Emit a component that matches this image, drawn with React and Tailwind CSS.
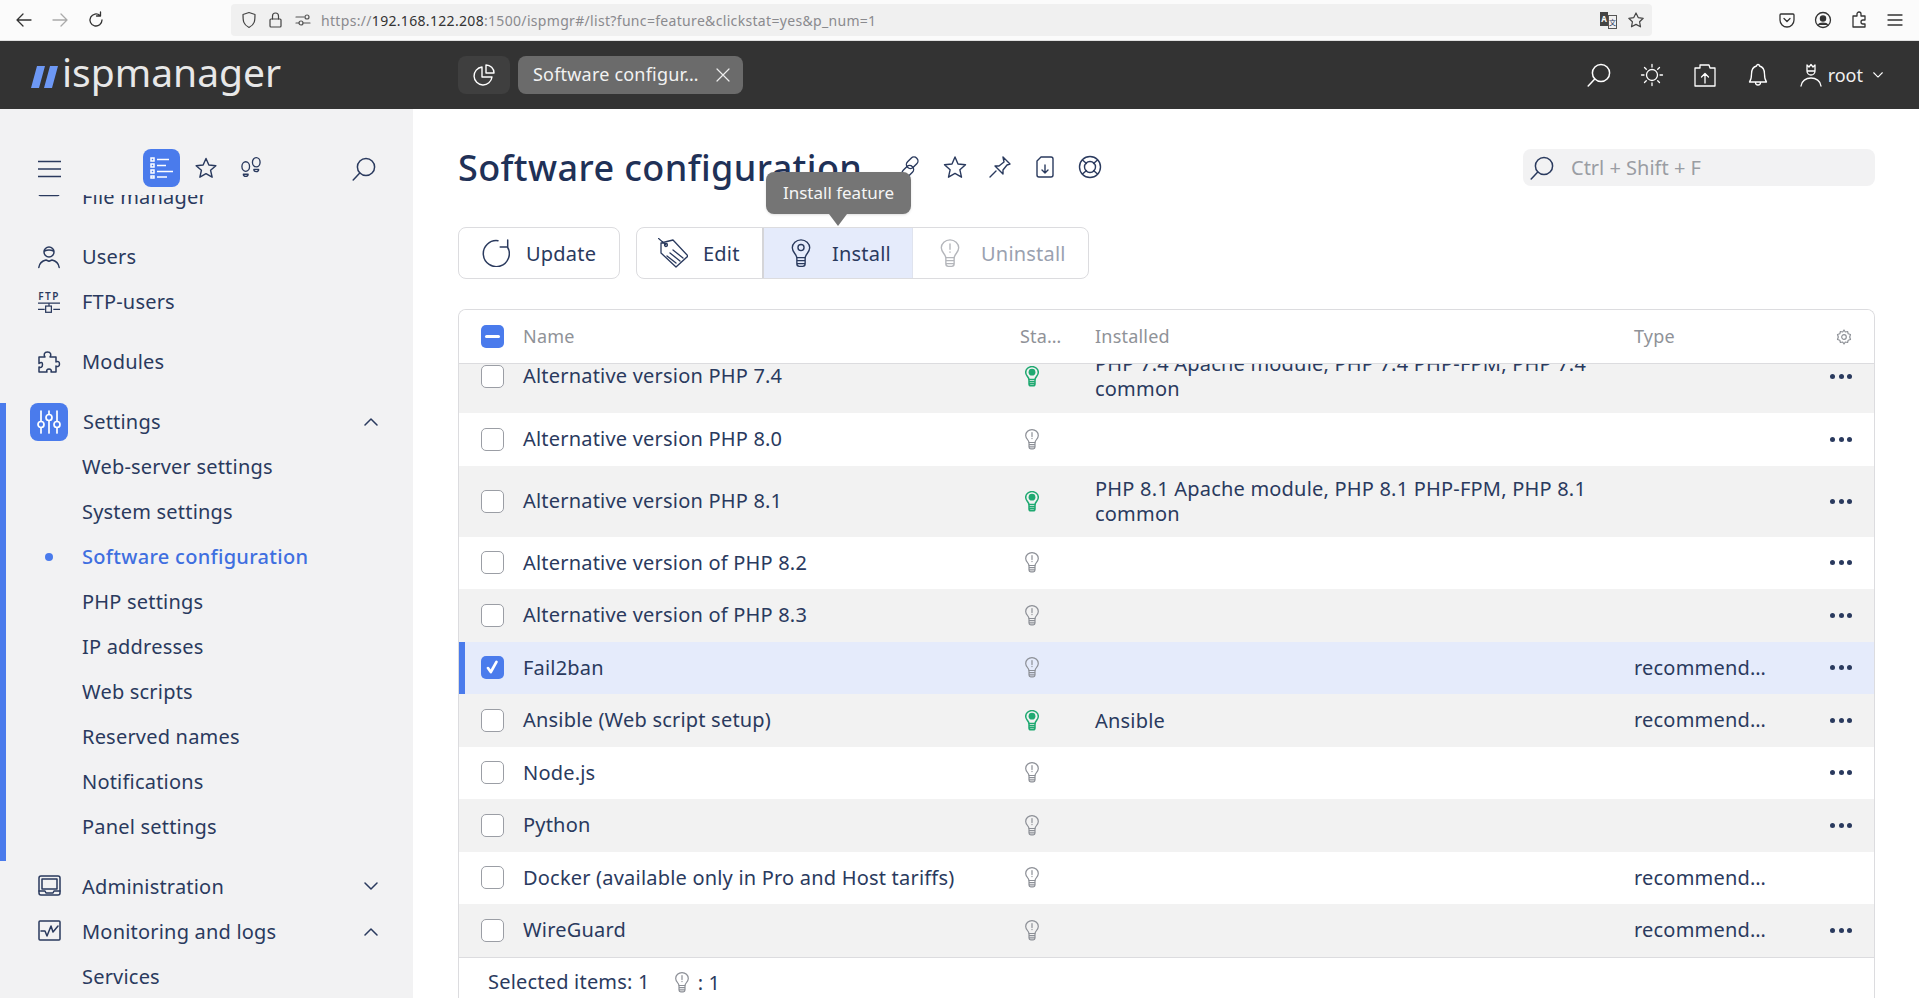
import React from "react";

const S = ({ w = 24, h = 24, vb, c = "#2a3a5e", sw = 1.5, children, className = "" }) => (
  <svg width={w} height={h} viewBox={vb || `0 0 ${w} ${h}`} fill="none" stroke={c} strokeWidth={sw} strokeLinecap="round" strokeLinejoin="round" className={"shrink-0 " + className}>
    {children}
  </svg>
);

const Bulb = ({ c = "#8c8f96", kind = "off", w = 14, h = 21, sw = 1.2 }) => (
  <S w={w} h={h} vb="0 0 14 21" c={c} sw={sw}>
    <path d="M4 13.500 C3.700 11 .7 9.500 .7 6.400 A6.300 5.800 0 0 1 13.300 6.400 C13.300 9.500 10.300 11 10 13.500 Z" />
    <path d="M4 13.500v4.500q0 1.800 1.800 1.800h2.400q1.800 0 1.800-1.800v-4.500M4 15.700h6M4 17.800h6" />
    {kind === "on" && <circle cx="7" cy="6.200" r="3.400" fill={c} stroke="none" />}
    {kind === "off" && <path d="M7 3.500v4M7 9.300v.3" />}
    {kind === "ring" && <circle cx="7" cy="6.200" r="2.200" />}
  </S>
);

const Search = ({ c = "#2a3a5e", s = 24 }) => (
  <S w={s} h={s} vb="0 0 24 24" c={c}>
    <circle cx="14" cy="10" r="8.600" />
    <path d="M7.800 16 L1.200 23" />
  </S>
);

const Check = ({ state }) => {
  if (state === "on")
    return (
      <span className="w-[23px] h-[23px] rounded-[5px] bg-[#4a7bec] flex items-center justify-center shrink-0">
        <svg width="17" height="17" viewBox="0 0 15 15" fill="none" stroke="#fff" strokeWidth="2.400" strokeLinecap="round" strokeLinejoin="round"><path d="M3.500 8l2.500 3.500L11 2.500" /></svg>
      </span>
    );
  if (state === "mix")
    return (
      <span className="w-[23px] h-[23px] rounded-[5px] bg-[#4a7bec] flex items-center justify-center shrink-0">
        <span className="w-[15px] h-[3px] bg-white rounded-sm" />
      </span>
    );
  return <span className="w-[23px] h-[23px] rounded-[5px] bg-white border border-[#9b9ea5] shrink-0" />;
};

const Chevron = ({ up, c = "#2a3a5e", s = 14 }) => (
  <svg width={s} height={s * 0.65} viewBox="0 0 14 9" fill="none" stroke={c} strokeWidth="1.500" strokeLinecap="round" strokeLinejoin="round" className="shrink-0">
    <path d={up ? "M1 8l6-6 6 6" : "M1 1l6 6 6-6"} />
  </svg>
);

const icons = {
  folder: <path d="M1 1v7a1.500 1.500 0 0 0 1.500 1.500h17A1.500 1.500 0 0 0 21 8V1" />,
  user: <><circle cx="11" cy="6" r="5" /><path d="M6.500 5q4.500-2 9 0" /><path d="M.8 21.500c.7-5 5-7 7.200-7.500l3 1.300 3-1.300c2.200.5 6.500 2.500 7.200 7.500" /></>,
  puzzle: <path d="M1 6h6c-1.500-2-1-5 2.500-5s4 3 2.500 5h6v5c1.500-1 3.500-.7 3.500 2s-2 3-3.500 2v6h-5c1-2-.5-3-2-3s-3 1-2 3H1v-5c2 1 3.500 0 3.500-2.500S3 11 1 12.500Z" />,
  admin: <><rect x="1" y="1" width="21" height="19" rx="2" /><rect x="4" y="4" width="15" height="10" /><path d="M1 16h6l1 2h7l1-2h6" /></>,
  chart: <><rect x="1" y="1" width="21" height="19" rx="1" /><path d="M3 11h4l2 5 4-10 2 6 5-6" /></>,
};

const Nav = ({ label, icon, chevron, ftp }) => (
  <div className="h-[45px] flex items-center pl-[38px] pr-[35px]">
    <span className="w-[22px] h-[23px] mr-[22px] flex items-center justify-center shrink-0">
      {ftp ? (
        <span className="flex flex-col items-center w-[22px]">
          <span className="text-[10px] leading-[10px] font-semibold tracking-[1.500px] text-[#2a3a5e]">FTP</span>
          <svg width="22" height="13" viewBox="0 0 23 13" fill="none" stroke="#2a3a5e" strokeWidth="1.300"><path d="M0 2h23M0 8.500h7M16 8.500h7M11.500 2v3" /><rect x="8" y="5" width="6" height="6.500" /></svg>
        </span>
      ) : (
        <S w={23} h={23} vb="0 0 23 23">{icons[icon]}</S>
      )}
    </span>
    <span className="flex-1 whitespace-nowrap">{label}</span>
    {chevron && <Chevron up={chevron === "up"} />}
  </div>
);

const Sub = ({ label, active }) => (
  <div className={"h-[45px] flex items-center pl-[76px] relative " + (active ? "text-[#3f6fe0] font-medium tracking-[0.3px]" : "")}>
    {active && <span className="absolute left-[39px] w-[8px] h-[8px] rounded-full bg-[#4a7bec]" />}
    {label}
  </div>
);

const rows = [
  { name: "Alternative version PHP 7.4", on: true, inst: ["PHP 7.4 Apache module, PHP 7.4 PHP-FPM, PHP 7.4", "common"], bg: "bg-[#f2f2f2]", tall: true, clip: true, more: true },
  { name: "Alternative version PHP 8.0", bg: "bg-white", more: true },
  { name: "Alternative version PHP 8.1", on: true, inst: ["PHP 8.1 Apache module, PHP 8.1 PHP-FPM, PHP 8.1", "common"], bg: "bg-[#f2f2f2]", tall: true, more: true },
  { name: "Alternative version of PHP 8.2", bg: "bg-white", more: true },
  { name: "Alternative version of PHP 8.3", bg: "bg-[#f2f2f2]", more: true },
  { name: "Fail2ban", sel: true, type: "recommend…", bg: "bg-[#e5ebfb]", more: true },
  { name: "Ansible (Web script setup)", on: true, inst: ["Ansible"], type: "recommend…", bg: "bg-[#f2f2f2]", more: true },
  { name: "Node.js", bg: "bg-white", more: true },
  { name: "Python", bg: "bg-[#f2f2f2]", more: true },
  { name: "Docker (available only in Pro and Host tariffs)", type: "recommend…", bg: "bg-white" },
  { name: "WireGuard", type: "recommend…", bg: "bg-[#f2f2f2]", more: true },
];

const Row = ({ r }) => (
  <div className={"flex items-center relative text-[#2a3a5e] " + r.bg + " " + (r.tall ? "h-[71px] " : "h-[52.500px] ") + (r.clip ? "-mt-[22px] pb-[3px]" : "")}>
    {r.sel && <span className="absolute left-0 top-0 bottom-0 w-[6px] bg-[#4a7bec]" />}
    <span className="w-[64px] pl-[22px] flex shrink-0"><Check state={r.sel ? "on" : "off"} /></span>
    <span className="w-[497px] shrink-0 whitespace-nowrap">{r.name}</span>
    <span className="w-[75px] shrink-0 flex pl-[5px]"><Bulb c={r.on ? "#1fa971" : "#8c8f96"} kind={r.on ? "on" : "off"} sw={r.on ? 1.500 : 1.200} /></span>
    <span className="w-[539px] shrink-0 leading-[25px] whitespace-nowrap">
      {(r.inst || []).map((l) => <div key={l}>{l}</div>)}
    </span>
    <span className="w-[185px] shrink-0 whitespace-nowrap">{r.type}</span>
    {r.more && (
      <span className="flex gap-[3.500px] ml-[11px]">
        <i className="w-[5px] h-[5px] rounded-full bg-[#2a3a5e]" /><i className="w-[5px] h-[5px] rounded-full bg-[#2a3a5e]" /><i className="w-[5px] h-[5px] rounded-full bg-[#2a3a5e]" />
      </span>
    )}
  </div>
);

export default function App() {
  return (
    <div className="w-[1919px] h-[998px] overflow-hidden bg-white flex flex-col text-[20px] tracking-[0.2px] text-[#2a3a5e]" style={{ fontFamily: '"Noto Sans", sans-serif' }}>
      {/* browser chrome */}
      <div className="h-[41px] shrink-0 flex items-center bg-[#fbfbfb] border-b border-[#e0e0e0] relative">
        <div className="flex items-center ml-[15px] w-[216px] gap-[18px]">
          <S w={18} h={18} c="#333" sw={1.300}><path d="M16 9H2M8 3L2 9l6 6" /></S>
          <S w={18} h={18} c="#aaa" sw={1.300}><path d="M2 9h14M10 3l6 6-6 6" /></S>
          <S w={18} h={18} c="#333" sw={1.300}><path d="M15 9a6 6 0 1 1-2-4.500M13.500 1v4h-4" /></S>
        </div>
        <div className="w-[1421px] h-[32px] rounded-[4px] bg-[#f0f0f0] flex items-center pl-[9px] pr-[7px]">
          <S w={18} h={18} c="#444" sw={1.200}><path d="M9 1.500l6 2c0 6 0 10-6 13-6-3-6-7-6-13Z" /></S>
          <S w={18} h={18} c="#444" sw={1.200} className="ml-[9px]"><rect x="3" y="8" width="11" height="8" rx="1" /><path d="M5.500 8V5a3 3 0 0 1 6 0v3" /></S>
          <S w={18} h={18} c="#555" sw={1.200} className="ml-[9px]"><path d="M2 6h8M2 12h3M9 12h7" /><circle cx="13" cy="6" r="2" /><circle cx="7" cy="12" r="2" /></S>
          <span className="ml-[9px] text-[14px] tracking-[0.32px] text-[#8a8a8e] whitespace-nowrap flex-1">https://<span className="text-[#333]">192.168.122.208</span>:1500/ispmgr#/list?func=feature&amp;clickstat=yes&amp;p_num=1</span>
          <span className="w-[17px] h-[17px] mr-[10px] relative flex tracking-normal">
            <span className="w-[10px] h-[14px] bg-[#444] text-white text-[8px] leading-[14px] text-center font-bold">A</span>
            <span className="w-[9px] h-[14px] mt-[3px] border border-[#555] text-[7px] leading-[12px] text-center" style={{ fontFamily: '"Noto Sans CJK SC", sans-serif' }}>文</span>
          </span>
          <S w={18} h={18} c="#444" sw={1.200}><path d="M9 2l2.200 4.600 5 .7-3.600 3.500.9 5L9 13.400 4.500 15.800l.9-5L1.800 7.300l5-.7Z" /></S>
        </div>
        <div className="flex items-center ml-[126px] gap-[18px]">
          <S w={18} h={18} c="#333" sw={1.300}><path d="M3 3h12a1 1 0 0 1 1 1v5a7 7 0 0 1-14 0V4a1 1 0 0 1 1-1Z" /><path d="M6 7.500l3 3 3-3" /></S>
          <S w={18} h={18} c="#333" sw={1.300}><circle cx="9" cy="9" r="7.500" /><circle cx="9" cy="7.500" r="2.600" fill="#333" /><path d="M4.500 14c1-2.500 8-2.500 9 0" fill="#333" /></S>
          <S w={18} h={18} c="#333" sw={1.300}><path d="M3 5h4V3a2 2 0 0 1 4 0v2h4v4h-2a2 2 0 0 0 0 4h2v3H3Z" /></S>
          <S w={18} h={18} c="#333" sw={1.300}><path d="M2 4h14M2 9h14M2 14h14" /></S>
        </div>
      </div>

      {/* header */}
      <div className="h-[68px] shrink-0 bg-[#333333] flex items-center relative">
        <div className="flex items-center ml-[30px] w-[428px]">
          <svg width="30" height="24" viewBox="0 0 30 24" fill="#6d98f5" className="shrink-0 mt-[3px]"><path d="M7 1h8L9 23H1ZM20 1h8l-6 22h-8Z" /></svg>
          <span className="text-[39px] leading-none text-[#e8e8e8] ml-[2px] whitespace-nowrap -mt-[7px] tracking-normal">ispmanager</span>
        </div>
        <div className="w-[52px] h-[38px] rounded-[8px] bg-[#3f3f3f] flex items-center justify-center">
          <S w={24} h={24} c="#fff" sw={1.400}><path d="M10 4a9 9 0 1 0 10 10H10Z" /><path d="M14 2v8h8a8 8 0 0 0-8-8Z" /></S>
        </div>
        <div className="w-[225px] h-[38px] ml-[8px] rounded-[8px] bg-[#6b6b6b] flex items-center pl-[15px] pr-[13px] text-[18px] text-[#f2f2f2]">
          <span className="flex-1 whitespace-nowrap -mt-[1px]">Software configur…</span>
          <S w={14} h={14} c="#eee" sw={1.200}><path d="M1 1l12 12M13 1L1 13" /></S>
        </div>
        <div className="flex items-center absolute right-[36px] top-0 bottom-0">
          <Search c="#fff" />
          <span className="ml-[29px] flex">
            <S w={24} h={24} c="#fff" sw={1.300}><circle cx="12" cy="12" r="5.500" /><path d="M12 1.500v2.500M12 20v2.500M1.500 12H4M20 12h2.500M4.500 4.500l1.800 1.800M17.700 17.700l1.800 1.800M4.500 19.500l1.800-1.800M17.700 6.300l1.800-1.800" /></S>
          </span>
          <span className="ml-[29px] flex">
            <S w={24} h={24} c="#fff" sw={1.300}><path d="M2 5h5V2h9l1 3h5v18H2ZM12 20v-9M8.500 14l3.500-3.500 3.500 3.500" /></S>
          </span>
          <span className="ml-[29px] flex">
            <S w={24} h={24} c="#fff" sw={1.300}><path d="M12 1.500a1.500 1.500 0 0 1 1.500 1.500c4 1 5 4 5 8 0 3 .5 6 2 8h-17c1.500-2 2-5 2-8 0-4 1-7 5-8A1.500 1.500 0 0 1 12 1.500ZM9.500 19.500a2.500 2.500 0 0 0 5 0" /></S>
          </span>
          <span className="ml-[29px] flex">
            <S w={24} h={24} c="#fff" sw={1.300}><path d="M8 2l2 2 2-2.500 2 2.500 2-2v6H8ZM8 8a4 4 0 0 0 8 0M2 23c.5-5 5-8 10-8s9.500 3 10 8" /></S>
          </span>
          <span className="ml-[5px] text-[#f0f0f0] text-[18px] tracking-normal">root</span>
          <span className="ml-[10px]"><Chevron c="#fff" s={10} /></span>
        </div>
      </div>

      <div className="flex flex-1 min-h-0">
        {/* sidebar */}
        <aside className="w-[413px] shrink-0 bg-[#f2f2f3] flex flex-col overflow-hidden">
          <div className="h-[86px] shrink-0 flex items-start pt-[40px] pl-[38px]">
            <S w={23} h={18} c="#2a3a5e" sw={1.500} className="mt-[11px]"><path d="M0 1.500h23M0 9h23M0 16.500h23" /></S>
            <span className="ml-[82px] w-[37px] h-[38px] rounded-[8px] bg-[#4a7bec] flex items-center justify-center">
              <svg width="24" height="22" viewBox="0 0 24 22" fill="none" stroke="#fff" strokeWidth="1.500"><rect x="1" y="1" width="3" height="3" /><rect x="1" y="7" width="3" height="3" /><rect x="1" y="13" width="3" height="3" /><rect x="1" y="19" width="3" height="2" /><path d="M7 2.500h12M7 8.500h9M7 14.500h16M7 20h10" /></svg>
            </span>
            <span className="ml-[15px] mt-[8px]"><S w={22} h={22} vb="0 0 23 23" sw={1.500}><path d="M11.500 1.500l3 6.800 7.300.8-5.500 4.800 1.600 7.200-6.400-3.700-6.400 3.700 1.600-7.200L1.200 9.100l7.300-.8Z" /></S></span>
            <span className="ml-[23px] mt-[8px]"><S w={22} h={22} vb="0 0 23 23" sw={1.400}><ellipse cx="6" cy="10" rx="4" ry="5" /><path d="M3.500 18h5c0 3-5 3-5 0Z" /><ellipse cx="17" cy="5.500" rx="4" ry="4.800" /><path d="M14.500 13h5c0 3-5 3-5 0Z" /></S></span>
            <span className="ml-[90px] mt-[8px]"><Search /></span>
          </div>
          <div className="flex-1 overflow-hidden">
            <div className="-mt-[20.500px]">
              <Nav label="File manager" icon="folder" />
              <div className="h-[15px]" />
              <Nav label="Users" icon="user" />
              <Nav label="FTP-users" ftp />
              <div className="h-[15px]" />
              <Nav label="Modules" icon="puzzle" />
              <div className="h-[18px]" />
              <div className="border-l-[6px] border-[#4a7bec] pb-[11.500px]">
                <div className="h-[38px] flex items-center pl-[24px] pr-[35px]">
                  <span className="w-[38px] h-[38px] rounded-[8px] bg-[#4a7bec] flex items-center justify-center mr-[15px] shrink-0">
                    <svg width="26" height="26" viewBox="0 0 26 26" fill="none" stroke="#fff" strokeWidth="1.700" strokeLinecap="round"><path d="M5 2v10M5 19v5M13 2v3M13 12v12M21 2v10M21 19v5" /><circle cx="5" cy="15.500" r="3" /><circle cx="13" cy="8.500" r="3" /><circle cx="21" cy="15.500" r="3" /></svg>
                  </span>
                  <span className="flex-1">Settings</span>
                  <Chevron up />
                </div>
                <div className="h-[3.500px]" />
                <Sub label="Web-server settings" />
                <Sub label="System settings" />
                <Sub label="Software configuration" active />
                <Sub label="PHP settings" />
                <Sub label="IP addresses" />
                <Sub label="Web scripts" />
                <Sub label="Reserved names" />
                <Sub label="Notifications" />
                <Sub label="Panel settings" />
              </div>
              <div className="h-[3.500px]" />
              <Nav label="Administration" icon="admin" chevron="down" />
              <Nav label="Monitoring and logs" icon="chart" chevron="up" />
              <div className="h-[45px] flex items-center pl-[82px]">Services</div>
            </div>
          </div>
        </aside>

        {/* main */}
        <main className="flex-1 min-w-0 pl-[45px] pr-[44px] relative">
          <div className="h-[81px] flex items-center pt-[36px]">
            <h1 className="text-[36px] font-medium leading-none tracking-[0.4px] text-[#1f3157] whitespace-nowrap w-[440px]">Software configuration</h1>
            <span className="-mt-[1px] flex"><S w={24} h={24} sw={1.400}><rect x="0.500" y="8" width="13" height="8" rx="4" transform="rotate(-45 7 12) translate(-1 5)" /><rect x="10.500" y="8" width="13" height="8" rx="4" transform="rotate(-45 17 12) translate(1 -5)" /></S></span>
            <span className="ml-[21px] -mt-[1px] flex"><S w={24} h={24} sw={1.400}><path d="M12 2l3 7 7.500.8-5.600 5 1.600 7.400-6.500-3.800-6.500 3.800 1.600-7.400-5.600-5L9 9Z" /></S></span>
            <span className="ml-[21px] -mt-[1px] flex"><S w={24} h={24} sw={1.400}><path d="M15 2l7 7-3 1-4 5 0 4-8-8 4 0 5-4ZM8 16l-6 6" /></S></span>
            <span className="ml-[21px] -mt-[1px] flex"><S w={24} h={24} sw={1.400}><path d="M8 2h10a2 2 0 0 1 2 2v16a2 2 0 0 1-2 2H6a2 2 0 0 1-2-2V6ZM12 10v8M9 15l3 3 3-3" /></S></span>
            <span className="ml-[21px] -mt-[1px] flex"><S w={24} h={24} sw={1.400}><circle cx="12" cy="12" r="10.500" /><circle cx="12" cy="12" r="5.500" /><path d="M4.500 5l4 3.500M19.500 5l-4 3.500M4.500 19l4-3.500M19.500 19l-4-3.500" /></S></span>
            <div className="ml-auto w-[352px] h-[37px] rounded-[8px] bg-[#f2f2f3] flex items-center pl-[7px]">
              <Search />
              <span className="ml-[17px] text-[#9a9da3] text-[20px] tracking-normal">Ctrl + Shift + F</span>
            </div>
          </div>

          {/* tooltip */}
          <div className="absolute left-[353px] top-[63px] w-[145px] h-[42px] rounded-[8px] bg-[#757575] text-[#f5f5f5] text-[17px] tracking-normal flex items-center justify-center shadow-sm z-10">
            Install feature
            <span className="absolute left-[63px] -bottom-[12px] w-0 h-0 border-l-[9px] border-r-[9px] border-t-[12px] border-l-transparent border-r-transparent border-t-[#757575]" />
          </div>

          {/* toolbar */}
          <div className="flex mt-[37px]">
            <div className="w-[162px] h-[52px] rounded-[8px] border border-[#dcdcdf] flex items-center pl-[23px]">
              <S w={28} h={28} sw={1.500}><path d="M16 1.700A13 13 0 1 0 25.500 8M25.700 1v7h-7.500" /></S>
              <span className="ml-[16px] pt-[1px]">Update</span>
            </div>
            <div className="ml-[16px] w-[453px] h-[52px] rounded-[8px] border border-[#dcdcdf] flex items-stretch overflow-hidden">
              <div className="w-[127px] flex items-center pl-[21px] border-r-2 border-[#d5d5d8]">
                <S w={30} h={30} sw={1.300}><path d="M0 0l8 7M3 5l12-3 15 16-12 11L3 15Z" /><circle cx="8" cy="7" r="1.500" /><path d="M12 15l10 8M15 12l10 8M9 18l9 7" /></S>
                <span className="ml-[15px] pt-[1px]">Edit</span>
              </div>
              <div className="w-[149px] bg-[#e5ebfb] flex items-center pl-[27px] border-r border-[#dfe3ee]">
                <Bulb c="#2a3a5e" kind="ring" w={20} h={29} sw={1} />
                <span className="ml-[21px] pt-[1px]">Install</span>
              </div>
              <div className="flex-1 flex items-center pl-[27px] text-[#9aa1b0]">
                <Bulb c="#b4b6bb" w={20} h={29} sw={1} />
                <span className="ml-[21px] pt-[1px]">Uninstall</span>
              </div>
            </div>
          </div>

          {/* table */}
          <div className="mt-[30px] w-[1417px] h-[700px] rounded-t-[8px] border border-b-0 border-[#dcdcdf] overflow-hidden flex flex-col">
            <div className="h-[54px] shrink-0 flex items-center bg-white text-[18px] text-[#8f9298] border-b border-[#dcdcdf] relative z-10">
              <span className="w-[64px] pl-[22px] flex shrink-0"><Check state="mix" /></span>
              <span className="w-[497px] shrink-0">Name</span>
              <span className="w-[75px] shrink-0">Sta…</span>
              <span className="w-[539px] shrink-0">Installed</span>
              <span className="w-[185px] shrink-0">Type</span>
              <span className="ml-[17px] flex"><S w={16} h={16} c="#8f9298" sw={1.200}><path d="M8 1l1.300 2 2.300-.5.600 2.300 2.300.7-.8 2.500.8 2.500-2.300.7-.6 2.300-2.300-.5L8 15l-1.300-2-2.300.5-.6-2.300-2.300-.7L2.300 8 1.500 5.500l2.300-.7.600-2.300 2.300.5Z" /><circle cx="8" cy="8" r="2.300" /></S></span>
            </div>
            <div className="overflow-hidden">
              {rows.map((r) => <Row key={r.name} r={r} />)}
              <div className="h-[50px] border-t border-[#dcdcdf] flex items-center pl-[29px] text-[#2a3a5e]">
                Selected items: 1
                <span className="ml-[25px] flex"><Bulb /></span>
                <span className="ml-[9px] mt-[2px]">: 1</span>
              </div>
            </div>
          </div>
        </main>
      </div>
    </div>
  );
}
